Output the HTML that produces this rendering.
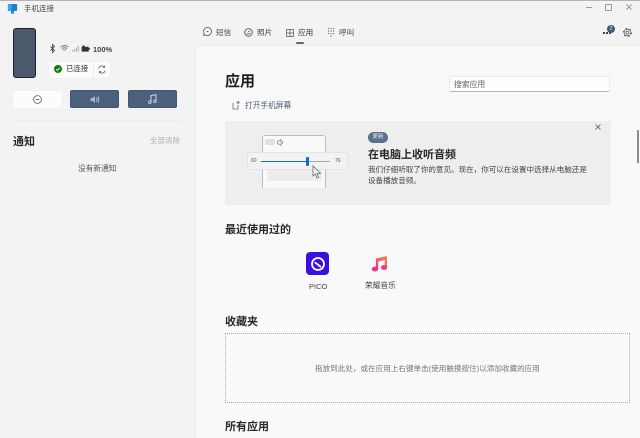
<!DOCTYPE html>
<html lang="zh">
<head>
<meta charset="utf-8">
<style>
html,body{margin:0;padding:0;width:640px;height:438px;overflow:hidden;background:#f3f3f3}
body{position:relative;font-family:"Liberation Sans","Noto Sans CJK SC",sans-serif;color:#333;filter:blur(.3px)}
.a{position:absolute;white-space:nowrap;line-height:1}
svg{position:absolute;overflow:visible}
.btn{position:absolute;border-radius:2px;box-sizing:border-box}
.blue{background:#4a607c;border:1px solid #44576f}
</style>
</head>
<body>
<div class="a" style="left:0;top:0;width:640px;height:1px;background:#b5b5b5"></div>

<!-- title bar -->
<svg style="left:7px;top:3px" width="11" height="12" viewBox="0 0 12 13"><path d="M1 1h10v7.500h-3.500v3h-3v-3H1z" fill="#1b80d0"/><path d="M1 1h4v7.500H1z" fill="#3aa5e8"/></svg>
<div class="a" style="left:24px;top:5px;font-size:7.500px;color:#444">手机连接</div>
<div class="a" style="left:586px;top:7px;width:6px;height:1px;background:#999"></div>
<div class="a" style="left:605px;top:4px;width:5px;height:5px;border:1px solid #999;border-radius:1px"></div>
<svg style="left:626px;top:4px" width="6" height="6" viewBox="0 0 7 7"><path d="M.5.500l6 6M6.500.500l-6 6" stroke="#888" stroke-width=".9"/></svg>

<!-- phone -->
<div class="a" style="left:13px;top:28px;width:23px;height:50px;box-sizing:border-box;background:#4a5a6c;border:1.500px solid #1e2228;border-radius:3px"></div>

<!-- status -->
<svg style="left:50px;top:44px" width="5" height="9" viewBox="0 0 6 11"><path d="M.5 3l5 5L3 10.500v-10L5.500 3l-5 5" fill="none" stroke="#444" stroke-width="1"/></svg>
<svg style="left:60px;top:45px" width="9" height="7" viewBox="0 0 10 8"><path d="M.5 2.500Q5-1.200 9.500 2.500M2 4.300q3-2.400 6 0M3.500 6q1.500-1.100 3 0" fill="none" stroke="#666" stroke-width=".9"/></svg>
<svg style="left:71px;top:45px" width="9" height="7" viewBox="0 0 9 8"><path d="M.5 6h1.200v1.500H.5zM2.700 4.500h1.200v3H2.700zM4.900 3h1.200v4.500H4.900zM7.100 1h1.200v6.500H7.100z" fill="#aaa"/></svg>
<svg style="left:81px;top:45px" width="10" height="7" viewBox="0 0 10 8"><path d="M0 2h1V.500h2.500V2H8v1.300h1.500v2H8v2.200H0z" fill="#333"/></svg>
<div class="a" style="left:93px;top:46px;font-size:7.500px;font-weight:bold;color:#444">100%</div>

<!-- connected -->
<div class="btn" style="left:49px;top:62px;width:61px;height:16px;background:#fbfbfb;border-radius:3px;box-shadow:0 0 1px #ddd"></div>
<div class="a" style="left:93px;top:62px;width:1px;height:16px;background:#e8e8e8"></div>
<svg style="left:54px;top:65px" width="8" height="8" viewBox="0 0 8 8"><circle cx="4" cy="4" r="4" fill="#107c10"/><path d="M2.200 4.100l1.300 1.300 2.400-2.600" fill="none" stroke="#fff" stroke-width=".9"/></svg>
<div class="a" style="left:66px;top:65px;font-size:7.400px;color:#333">已连接</div>
<svg style="left:98px;top:65px" width="8" height="9" viewBox="0 0 8 9"><path d="M.8 3.500A3.300 3.300 0 0 1 6.500 2M7.200 5.500A3.300 3.300 0 0 1 1.500 7M6.700.6v1.800H4.900M1.300 8.400V6.600h1.800" fill="none" stroke="#555" stroke-width=".7"/></svg>

<!-- quick buttons -->
<div class="btn" style="left:13px;top:91px;width:49px;height:17px;background:#fcfcfc;border-radius:3px;box-shadow:0 0 1px #ddd"></div>
<svg style="left:33px;top:95px" width="9" height="9" viewBox="0 0 9 9"><circle cx="4.500" cy="4.500" r="3.900" fill="none" stroke="#555" stroke-width=".8"/><path d="M2.700 4.500h3.600" stroke="#555" stroke-width=".8"/></svg>
<div class="btn blue" style="left:70px;top:90px;width:49px;height:18px"></div>
<svg style="left:90px;top:95px" width="11" height="9" viewBox="0 0 11 9"><path d="M.5 3h2L5 1v7L2.500 6h-2z" fill="#a9b6c6"/><path d="M6.500 2.500q1 2 0 4M8 1.500q1.700 3 0 6" fill="none" stroke="#cdd6e0" stroke-width=".8"/></svg>
<div class="btn blue" style="left:128px;top:90px;width:49px;height:18px"></div>
<svg style="left:148px;top:94px" width="9" height="10" viewBox="0 0 9 10"><path d="M3 8V1.500L8 .7V7" fill="none" stroke="#dde3ea" stroke-width=".9"/><circle cx="1.900" cy="8.200" r="1.300" fill="none" stroke="#dde3ea" stroke-width=".8"/><circle cx="6.900" cy="7.300" r="1.300" fill="none" stroke="#dde3ea" stroke-width=".8"/></svg>

<div class="a" style="left:13px;top:120px;width:170px;height:1px;background:#ececec"></div>
<div class="a" style="left:13px;top:136px;font-size:11px;font-weight:bold;color:#2a2a2a;margin-top:1px">通知</div>
<div class="a" style="left:150px;top:137px;font-size:7.500px;color:#b0b0b0">全部清除</div>
<div class="a" style="left:78px;top:165px;font-size:7.700px;color:#555">没有新通知</div>

<!-- tabs -->
<svg style="left:203px;top:27px" width="9" height="10" viewBox="0 0 9 10"><path d="M4.500.5a4 4 0 1 1-2.300 7.300L.7 8.500l.5-1.900A4 4 0 0 1 4.500.5z" fill="none" stroke="#555" stroke-width=".8"/><path d="M3.500 4.500h2" stroke="#555" stroke-width=".8"/></svg>
<div class="a" style="left:216px;top:29px;font-size:7.600px;color:#444">短信</div>
<svg style="left:244px;top:28px" width="9" height="9" viewBox="0 0 9 9"><circle cx="4.500" cy="4.500" r="3.800" fill="none" stroke="#555" stroke-width=".9"/><path d="M2.500 5.500q2 1.500 4-.5" fill="none" stroke="#555" stroke-width=".8"/><circle cx="5" cy="3.500" r=".7" fill="#555"/></svg>
<div class="a" style="left:257px;top:29px;font-size:7.600px;color:#444">照片</div>
<svg style="left:286px;top:29px" width="8" height="8" viewBox="0 0 8 8"><path d="M.5.500h7v7h-7zM.5 4h7M4 .5v7" fill="none" stroke="#555" stroke-width=".7"/></svg>
<div class="a" style="left:298px;top:29px;font-size:7.600px;color:#333">应用</div>
<div class="a" style="left:296px;top:42px;width:8px;height:1.500px;background:#666;border-radius:1px"></div>
<svg style="left:328px;top:28px" width="7" height="9" viewBox="0 0 7 9"><g fill="#777"><rect x="0" y="0" width="1.200" height="1.200"/><rect x="2.500" y="0" width="1.200" height="1.200"/><rect x="5" y="0" width="1.200" height="1.200"/><rect x="0" y="2.500" width="1.200" height="1.200"/><rect x="2.500" y="2.500" width="1.200" height="1.200"/><rect x="5" y="2.500" width="1.200" height="1.200"/><rect x="0" y="5" width="1.200" height="1.200"/><rect x="2.500" y="5" width="1.200" height="1.200"/><rect x="5" y="5" width="1.200" height="1.200"/><rect x="2.500" y="7.500" width="1.200" height="1.200"/></g></svg>
<div class="a" style="left:339px;top:29px;font-size:7.600px;color:#444">呼叫</div>

<!-- top right -->
<div class="a" style="left:603px;top:32px;width:1.500px;height:1.500px;background:#444;box-shadow:3px 0 #444,6px 0 #444"></div>
<div class="a" style="left:607px;top:25px;width:8px;height:8px;border-radius:50%;background:#3f5a80;color:#e8eef5;font-size:5.500px;line-height:8px;text-align:center">2</div>
<svg style="left:623px;top:28px" width="9" height="9" viewBox="0 0 9 9"><circle cx="4.500" cy="4.500" r="1.500" fill="none" stroke="#555" stroke-width=".7"/><circle cx="4.500" cy="4.500" r="3.400" fill="none" stroke="#555" stroke-width=".7"/><circle cx="4.500" cy="4.500" r="4.100" fill="none" stroke="#555" stroke-width="1" stroke-dasharray="1.400 2.900"/></svg>

<!-- main pane -->
<div class="a" style="left:195px;top:45px;width:445px;height:393px;background:#f9f9f9;border-top:1px solid #e9e9e9;border-left:1px solid #e9e9e9;border-top-left-radius:5px;box-sizing:border-box"></div>

<div class="a" style="left:225px;top:74px;font-size:15px;font-weight:bold;color:#1f1f1f">应用</div>
<div class="a" style="left:449px;top:76px;width:161px;height:16px;box-sizing:border-box;background:#fdfdfd;border:1px solid #ececec;border-bottom:1px solid #b5b5b5;border-radius:2px"></div>
<div class="a" style="left:454px;top:81px;font-size:7.800px;color:#666">搜索应用</div>
<svg style="left:232px;top:100px" width="8" height="10" viewBox="0 0 8 10"><path d="M1 3v6h5V5M4 2.500h3M5.700 1l1.500 1.500L5.700 4" fill="none" stroke="#5d7088" stroke-width=".8"/></svg>
<div class="a" style="left:245px;top:102px;font-size:7.700px;color:#475a72">打开手机屏幕</div>

<!-- banner -->
<div class="a" style="left:225px;top:121px;width:386px;height:84px;background:#eeeeee"></div>
<div class="a" style="left:262px;top:135px;width:64px;height:53px;box-sizing:border-box;background:#f9f9f9;border:1px solid #b9bec4;border-bottom:none;border-radius:3px 3px 0 0"></div>
<div class="a" style="left:265px;top:139px;width:10px;height:6px;background:#e0e0e0;border-radius:2px"></div>
<svg style="left:277px;top:139px" width="8" height="7" viewBox="0 0 8 7"><path d="M.5 2h1.500L4 .5v6L2 5H.5z" fill="none" stroke="#666" stroke-width=".6"/><path d="M5.300 2q.7 1.500 0 3" fill="none" stroke="#666" stroke-width=".6"/></svg>
<div class="a" style="left:267px;top:170px;width:55px;height:11px;background:#ececec"></div>
<div class="a" style="left:247px;top:152px;width:101px;height:18px;box-sizing:border-box;background:#f2f2f2;border:1px solid #e4e4e4;border-radius:2px"></div>
<div class="a" style="left:251px;top:159px;font-size:5px;color:#555">60</div>
<div class="a" style="left:335px;top:159px;font-size:5px;color:#555">76</div>
<div class="a" style="left:261px;top:161px;width:47px;height:1px;background:#1a6bb8"></div>
<div class="a" style="left:308px;top:161px;width:22px;height:1px;background:#aaa"></div>
<div class="a" style="left:306px;top:157px;width:3px;height:9px;background:#1a6bb8;border-radius:1px"></div>
<svg style="left:312px;top:165px" width="10" height="14" viewBox="0 0 10 14"><path d="M1 1v10l2.300-2 1.700 4 1.700-.8L5 8.400h3.500z" fill="#f4f4f4" stroke="#6b6b6b" stroke-width=".8"/></svg>

<div class="a" style="left:368px;top:132px;width:20px;height:11px;background:#5a7190;border-radius:6px;color:#e8eef5;font-size:5.500px;line-height:11px;text-align:center">更新</div>
<div class="a" style="left:368px;top:150px;font-size:11px;font-weight:bold;color:#2a2a2a">在电脑上收听音频</div>
<div class="a" style="left:368px;top:166px;font-size:7.560px;color:#444">我们仔细听取了你的意见。现在，你可以在设置中选择从电脑还是</div>
<div class="a" style="left:368px;top:177px;font-size:7.560px;color:#444">设备播放音频。</div>
<svg style="left:595px;top:124px" width="6" height="6" viewBox="0 0 6 6"><path d="M.5.500l5 5M5.500.500l-5 5" stroke="#555" stroke-width=".8"/></svg>

<!-- scrollbar -->
<div class="a" style="left:637px;top:130px;width:1.500px;height:33px;background:#8c8c8c"></div>

<!-- recent -->
<div class="a" style="left:225px;top:225px;font-size:11px;font-weight:bold;color:#2a2a2a">最近使用过的</div>
<div class="a" style="left:306px;top:252px;width:23px;height:23px;background:#3a10e0;border-radius:4px"></div>
<svg style="left:309.500px;top:255.500px" width="16" height="16" viewBox="0 0 16 16"><circle cx="8" cy="8" r="6" fill="none" stroke="#fff" stroke-width="1.800"/><path d="M4.800 6.300L11 11" stroke="#fff" stroke-width="1.800"/></svg>
<div class="a" style="left:309px;top:283px;font-size:7.500px;color:#444">PICO</div>
<svg style="left:371px;top:255px" width="17" height="17" viewBox="0 0 17 17">
<defs><linearGradient id="m" x1="0" y1="1" x2="1" y2="0"><stop offset="0" stop-color="#f0318a"/><stop offset="1" stop-color="#ff8a3d"/></linearGradient></defs>
<path d="M5 14V3.500L16 1v11h-2.200V5l-6.600 1.500V14z" fill="url(#m)"/><ellipse cx="4" cy="14" rx="3.200" ry="2.500" fill="#f0318a"/><ellipse cx="13" cy="12.500" rx="3.200" ry="2.500" fill="#ee4080"/></svg>
<div class="a" style="left:365px;top:282px;font-size:7.700px;color:#444">荣耀音乐</div>

<!-- favorites -->
<div class="a" style="left:225px;top:317px;font-size:11px;font-weight:bold;color:#2a2a2a">收藏夹</div>
<div class="a" style="left:225px;top:333px;width:405px;height:70px;box-sizing:border-box;border:1px dotted #aaa"></div>
<div class="a" style="left:315px;top:365px;font-size:7.580px;color:#777">拖放到此处，或在应用上右键单击(使用触摸按住)以添加收藏的应用</div>

<div class="a" style="left:225px;top:422px;font-size:11px;font-weight:bold;color:#2a2a2a">所有应用</div>
</body>
</html>
